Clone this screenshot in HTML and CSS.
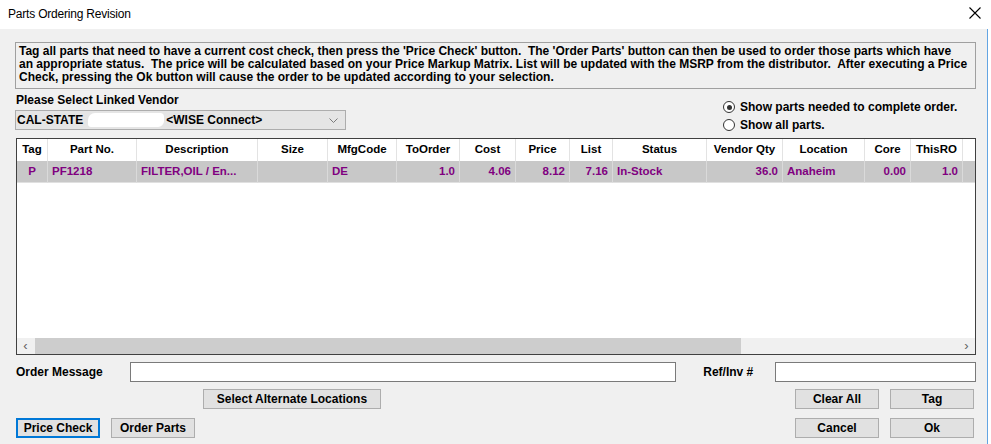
FILE: index.html
```html
<!DOCTYPE html>
<html lang="en">
<head>
    <meta charset="UTF-8">
    <title>Parts Ordering Revision</title>
    <link rel="stylesheet" href="styles.css">
</head>
<body>
<div class="window">
    <div class="titlebar">
        <span class="title">Parts Ordering Revision</span>
        <svg class="close" width="12" height="12" viewBox="0 0 12 12">
            <path d="M0.5 0.5 L11.5 11.5 M11.5 0.5 L0.5 11.5" stroke="#000" stroke-width="1.1" fill="none"/>
        </svg>
    </div>
    <div class="dialog">
        <div class="info">
            Tag all parts that need to have a current cost check, then press the 'Price Check' button.&nbsp; The 'Order Parts' button can then be used to order those parts which have<br>
            an appropriate status.&nbsp; The price will be calculated based on your Price Markup Matrix. List will be updated with the MSRP from the distributor.&nbsp; After executing a Price<br>
            Check, pressing the Ok button will cause the order to be updated according to your selection.
        </div>

        <div class="vendor-row">
            <div class="vendor">
                <div class="lbl">Please Select Linked Vendor</div>
                <div class="combo">
                    <span>CAL-STATE</span>
                    <span class="redact"></span>
                    <span>&lt;WISE Connect&gt;</span>
                    <svg class="chev" width="9" height="5" viewBox="0 0 9 5">
                        <path d="M0.5 0.5 L4.5 4.5 L8.5 0.5" stroke="#7a7a7a" fill="none"/>
                    </svg>
                </div>
            </div>
            <div class="radios">
                <label class="radio"><span class="dot on"></span>Show parts needed to complete order.</label>
                <label class="radio"><span class="dot"></span>Show all parts.</label>
            </div>
        </div>

        <div class="grid">
            <div class="grow head">
                <div class="c w-tag ctr">Tag</div>
                <div class="c w-part ctr">Part No.</div>
                <div class="c w-desc ctr">Description</div>
                <div class="c w-size ctr">Size</div>
                <div class="c w-mfg ctr">MfgCode</div>
                <div class="c w-ord ctr">ToOrder</div>
                <div class="c w-cost ctr">Cost</div>
                <div class="c w-price ctr">Price</div>
                <div class="c w-list ctr">List</div>
                <div class="c w-status ctr">Status</div>
                <div class="c w-vqty ctr">Vendor Qty</div>
                <div class="c w-loc ctr">Location</div>
                <div class="c w-core ctr">Core</div>
                <div class="c w-ro ctr">ThisRO</div>
                <div class="c fill"></div>
            </div>
            <div class="grow data">
                <div class="c w-tag ctr">P</div>
                <div class="c w-part">PF1218</div>
                <div class="c w-desc">FILTER,OIL / En...</div>
                <div class="c w-size"></div>
                <div class="c w-mfg">DE</div>
                <div class="c w-ord num">1.0</div>
                <div class="c w-cost num">4.06</div>
                <div class="c w-price num">8.12</div>
                <div class="c w-list num">7.16</div>
                <div class="c w-status">In-Stock</div>
                <div class="c w-vqty num">36.0</div>
                <div class="c w-loc">Anaheim</div>
                <div class="c w-core num">0.00</div>
                <div class="c w-ro num">1.0</div>
                <div class="c fill"></div>
            </div>
            <div class="empty"></div>
            <div class="hscroll">
                <span class="arrow">&lsaquo;</span>
                <div class="track"><div class="thumb"></div></div>
                <span class="arrow">&rsaquo;</span>
            </div>
        </div>

        <div class="msg-row">
            <span class="msg-lbl">Order Message</span>
            <div class="field msg-input"></div>
            <span class="ref-lbl">Ref/Inv #</span>
            <div class="field ref-input"></div>
        </div>

        <div class="btn-row first">
            <button class="btn alt" type="button">Select Alternate Locations</button>
            <div class="right">
                <button class="btn" type="button">Clear All</button>
                <button class="btn" type="button">Tag</button>
            </div>
        </div>
        <div class="btn-row">
            <button class="btn focus" type="button">Price Check</button>
            <button class="btn" type="button">Order Parts</button>
            <div class="right">
                <button class="btn" type="button">Cancel</button>
                <button class="btn" type="button">Ok</button>
            </div>
        </div>
    </div>
</div>
</body>
</html>
```

FILE: styles.css
```css
body {
    margin: 0;
    padding: 0;
    background: #fff;
    font-family: 'Liberation Sans', Arial, sans-serif;
    font-size: 12px;
    color: #000;
}

.window {
    width: 991px;
    height: 444px;
    overflow: hidden;
    background: #fff;
}

.titlebar {
    height: 29px;
    display: flex;
    align-items: center;
    justify-content: space-between;
    padding: 0 10px 0 8px;
    background: #fff;
}
.title {
    font-size: 12px;
    letter-spacing: -0.2px;
    margin-top: -2px;
}
.close {
    margin-top: -4px;
}

.dialog {
    width: 961px;
    height: 415px;
    background: #f0f0f0;
    padding: 13px 11px 0 15px;
    border-right: 1px solid #63a5e3;
    box-sizing: content-box;
    font-weight: bold;
}

.info {
    border: 1px solid #a0a0a0;
    height: 43px;
    padding: 2px 3px 0 3px;
    line-height: 13px;
    background: #f0f0f0;
    box-sizing: content-box;
    width: 953px;
    white-space: nowrap;
    overflow: hidden;
}

.vendor-row {
    display: flex;
    justify-content: space-between;
    margin-top: 5px;
    height: 36px;
}
.vendor .lbl {
    padding-left: 1px;
    height: 16px;
    line-height: 13px;
}
.combo {
    width: 331px;
    height: 20px;
    box-sizing: border-box;
    border: 1px solid #adadad;
    background: #e5e5e5;
    display: flex;
    align-items: center;
    padding-left: 1px;
    position: relative;
}
.redact {
    display: inline-block;
    width: 76px;
    height: 14px;
    background: #fff;
    border-radius: 7px 4px 6px 3px;
    margin: 0 2px 0 5px;
}
.chev {
    position: absolute;
    right: 7px;
    top: 7px;
}

.radios {
    width: 253px;
    height: 36px;
    padding-top: 4px;
    box-sizing: border-box;
}
.radio {
    display: flex;
    align-items: center;
    height: 18px;
}
.dot {
    width: 10px;
    height: 10px;
    border: 1px solid #333;
    border-radius: 50%;
    background: #fff;
    margin-right: 5px;
    position: relative;
}
.dot.on::after {
    content: '';
    position: absolute;
    left: 2.5px;
    top: 2.5px;
    width: 5px;
    height: 5px;
    border-radius: 50%;
    background: #333;
}

.grid {
    margin-top: 8px;
    margin-left: 1px;
    height: 217px;
    border: 1px solid #404040;
    background: #fff;
    box-sizing: border-box;
    display: flex;
    flex-direction: column;
    overflow: hidden;
    font-size: 11.5px;
}
.grow {
    display: flex;
    height: 22px;
    flex-shrink: 0;
}
.grow .c {
    box-sizing: border-box;
    line-height: 21px;
    padding: 0 4px;
    white-space: nowrap;
    overflow: hidden;
    border-right: 1px solid #e3e3e3;
}
.head .c {
    background: #fff;
}
.data .c {
    background: #c8c8c8;
    color: #800080;
    border-right-color: #dadada;
    border-bottom: 1px solid #e0e0e0;
}
.grow .ctr { text-align: center; }
.grow .num { text-align: right; }
.grow .fill {
    flex: 1;
    border-right: none;
}

.w-tag { width: 31px; }
.w-part { width: 89px; }
.w-desc { width: 121px; }
.w-size { width: 70px; }
.w-mfg { width: 69px; }
.w-ord { width: 63px; }
.w-cost { width: 56px; }
.w-price { width: 54px; }
.w-list { width: 43px; }
.w-status { width: 94px; }
.w-vqty { width: 76px; }
.w-loc { width: 82px; }
.w-core { width: 46px; }
.w-ro { width: 52px; }

.empty {
    flex: 1;
}
.hscroll {
    height: 16px;
    flex-shrink: 0;
    display: flex;
    align-items: center;
    background: #f0f0f0;
    color: #606060;
    font-size: 13px;
    font-weight: normal;
}
.arrow {
    width: 17px;
    text-align: center;
    line-height: 14px;
}
.track {
    flex: 1;
    height: 16px;
}
.thumb {
    width: 706px;
    height: 16px;
    background: #cdcdcd;
    margin-left: 1px;
}

.msg-row {
    display: flex;
    align-items: center;
    margin-top: 7px;
    height: 20px;
}
.msg-lbl {
    width: 114px;
    padding-left: 1px;
}
.field {
    height: 20px;
    box-sizing: border-box;
    border: 1px solid #7a7a7a;
    background: #fff;
}
.msg-input { width: 547px; }
.ref-lbl {
    margin-left: 27px;
    width: 72px;
}
.ref-input { width: 201px; }

.btn-row {
    display: flex;
    margin-top: 9px;
    height: 20px;
}
.btn-row.first {
    margin-top: 7px;
}
.btn {
    height: 20px;
    width: 84px;
    padding: 0;
    border: 1px solid #adadad;
    background: #e1e1e1;
    font-family: 'Liberation Sans', Arial, sans-serif;
    font-size: 12px;
    font-weight: bold;
    color: #000;
    margin-left: 11px;
}
.btn-row .btn:first-child {
    margin-left: 1px;
}
.btn.alt {
    width: 178px;
    margin-left: 188px !important;
}
.btn.focus {
    border: 2px solid #0078d7;
}
.right {
    margin-left: auto;
    margin-right: 2px;
    display: flex;
}
```
